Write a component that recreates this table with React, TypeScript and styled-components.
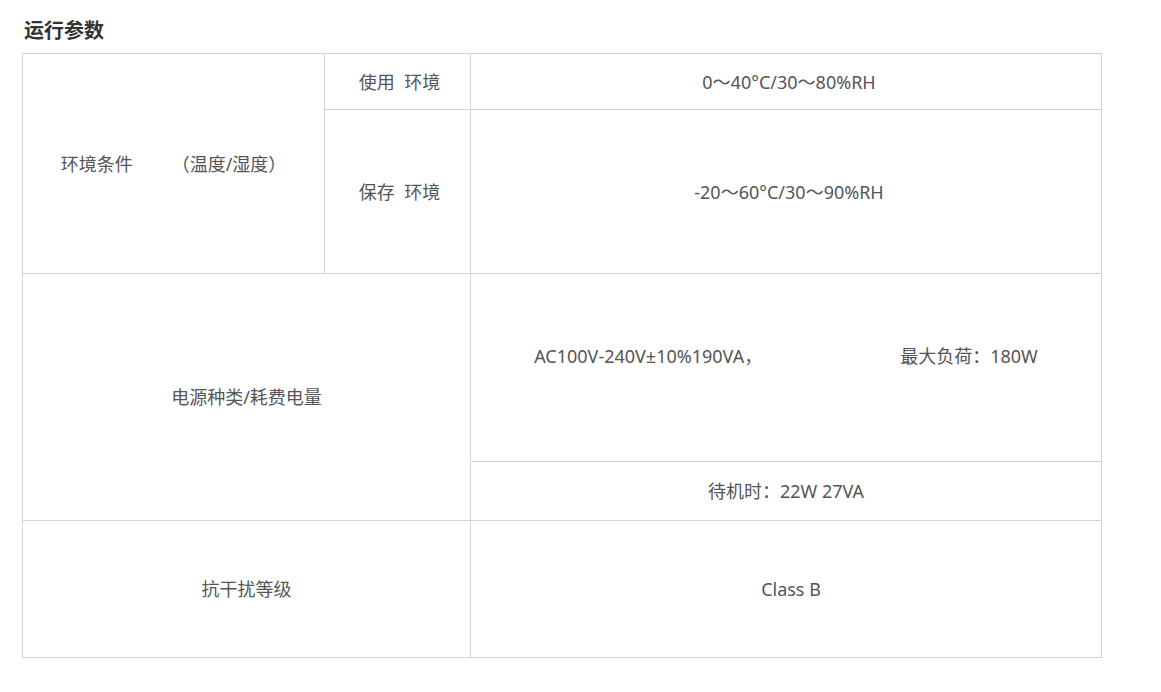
import React from "react";
import styled, { createGlobalStyle } from "styled-components";

const GlobalStyle = createGlobalStyle`
  body {
    margin: 0;
    background: #fff;
    font-family: "Noto Sans", "Noto Sans CJK SC", sans-serif;
  }
`;

const Page = styled.div`
  padding: 18px 22px;
`;

const Title = styled.h2`
  margin: 0 0 11px 2px;
  font-size: 20px;
  line-height: 24px;
  font-weight: 700;
  color: #333;
  font-family: "Noto Sans CJK SC", sans-serif;
`;

const Grid = styled.div`
  display: grid;
  width: max-content;
  grid-template-columns: 302px 146px 631px;
  grid-template-rows: 56px 164px 188px 59px 137px;
  border-top: 1px solid #d2d2d2;
  border-left: 1px solid #d2d2d2;
`;

const Cell = styled.div<{ $rows?: number; $cols?: number; $pb?: number; $pl?: number }>`
  grid-row: span ${(p) => p.$rows || 1};
  grid-column: span ${(p) => p.$cols || 1};
  border-right: 1px solid #d2d2d2;
  border-bottom: 1px solid #d2d2d2;
  display: flex;
  align-items: center;
  justify-content: center;
  padding-bottom: ${(p) => p.$pb || 0}px;
  padding-left: ${(p) => p.$pl || 0}px;
  color: #555;
  font-size: 18px;
  line-height: 24px;
  white-space: pre;
`;

const Split = styled.div`
  display: flex;
  gap: 138px;
`;

const App = () => {
  return (
    <Page>
      <GlobalStyle />
      <Title>运行参数</Title>
      <Grid>
        <Cell $rows={2}>{"环境条件\u3000\u3000\u2009（温度/湿度）"}</Cell>
        <Cell $pl={4}>{"使用\u00a0\u00a0环境"}</Cell>
        <Cell $pl={6}>0～40°C/30～80%RH</Cell>
        <Cell $pl={4}>{"保存\u00a0\u00a0环境"}</Cell>
        <Cell $pl={6}>-20～60°C/30～90%RH</Cell>
        <Cell $rows={2} $cols={2}>电源种类/耗费电量</Cell>
        <Cell $pb={24}>
          <Split>
            <span>AC100V-240V±10%190VA，</span>
            <span>最大负荷：180W</span>
          </Split>
        </Cell>
        <Cell>待机时：22W 27VA</Cell>
        <Cell $cols={2}>抗干扰等级</Cell>
        <Cell $pl={10}>Class B</Cell>
      </Grid>
    </Page>
  );
};

export default App;
